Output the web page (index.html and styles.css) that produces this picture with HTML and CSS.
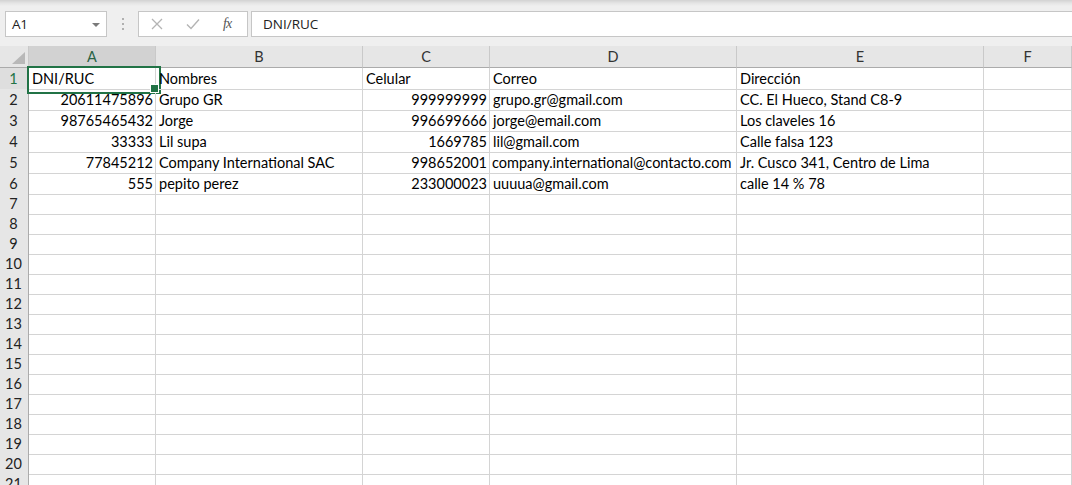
FILE: index.html
```html
<!DOCTYPE html>
<html lang="es">
<head>
<meta charset="utf-8">
<title>Hoja de cálculo</title>
<link rel="stylesheet" href="styles.css">
</head>
<body>
<div class="formula-area">
  <div class="namebox"><span class="ref">A1</span><span class="caret"></span></div>
  <div class="grip"><i></i><i></i><i></i></div>
  <div class="fxbox">
    <svg class="ic-x" width="12" height="12" viewBox="0 0 12 12"><path d="M1 1 L11 11 M11 1 L1 11" stroke="#b4b4b4" stroke-width="1.3" fill="none"/></svg>
    <svg class="ic-ok" width="14" height="12" viewBox="0 0 14 12"><path d="M1 6.5 L5 10.5 L13 1.5" stroke="#b4b4b4" stroke-width="1.4" fill="none"/></svg>
    <span class="fx">fx</span>
  </div>
  <div class="formula-input">DNI/RUC</div>
</div>

<div class="sheet">
  <div class="row hdr">
    <div class="corner"><span class="tri"></span></div>
    <div class="ch sel">A</div><div class="ch">B</div><div class="ch">C</div><div class="ch">D</div><div class="ch">E</div><div class="ch">F</div>
  </div>
  <div class="row data">
    <div class="rh selrow">1</div>
    <div class="c active">DNI/RUC</div><div class="c">Nombres</div><div class="c">Celular</div><div class="c">Correo</div><div class="c">Dirección</div><div class="c"></div>
  </div>
  <div class="row data">
    <div class="rh">2</div>
    <div class="c n">20611475896</div><div class="c">Grupo GR</div><div class="c n">999999999</div><div class="c">grupo.gr@gmail.com</div><div class="c">CC. El Hueco, Stand C8-9</div><div class="c"></div>
  </div>
  <div class="row data">
    <div class="rh">3</div>
    <div class="c n">98765465432</div><div class="c">Jorge</div><div class="c n">996699666</div><div class="c">jorge@email.com</div><div class="c">Los claveles 16</div><div class="c"></div>
  </div>
  <div class="row data">
    <div class="rh">4</div>
    <div class="c n">33333</div><div class="c">Lil supa</div><div class="c n">1669785</div><div class="c">lil@gmail.com</div><div class="c">Calle falsa 123</div><div class="c"></div>
  </div>
  <div class="row data">
    <div class="rh">5</div>
    <div class="c n">77845212</div><div class="c">Company International SAC</div><div class="c n">998652001</div><div class="c clip">company.international@contacto.com</div><div class="c">Jr. Cusco 341, Centro de Lima</div><div class="c"></div>
  </div>
  <div class="row data">
    <div class="rh">6</div>
    <div class="c n">555</div><div class="c">pepito perez</div><div class="c n">233000023</div><div class="c">uuuua@gmail.com</div><div class="c">calle 14 % 78</div><div class="c"></div>
  </div>
  <div class="row"><div class="rh">7</div><div class="c"></div><div class="c"></div><div class="c"></div><div class="c"></div><div class="c"></div><div class="c"></div></div>
  <div class="row"><div class="rh">8</div><div class="c"></div><div class="c"></div><div class="c"></div><div class="c"></div><div class="c"></div><div class="c"></div></div>
  <div class="row"><div class="rh">9</div><div class="c"></div><div class="c"></div><div class="c"></div><div class="c"></div><div class="c"></div><div class="c"></div></div>
  <div class="row"><div class="rh">10</div><div class="c"></div><div class="c"></div><div class="c"></div><div class="c"></div><div class="c"></div><div class="c"></div></div>
  <div class="row"><div class="rh">11</div><div class="c"></div><div class="c"></div><div class="c"></div><div class="c"></div><div class="c"></div><div class="c"></div></div>
  <div class="row"><div class="rh">12</div><div class="c"></div><div class="c"></div><div class="c"></div><div class="c"></div><div class="c"></div><div class="c"></div></div>
  <div class="row"><div class="rh">13</div><div class="c"></div><div class="c"></div><div class="c"></div><div class="c"></div><div class="c"></div><div class="c"></div></div>
  <div class="row"><div class="rh">14</div><div class="c"></div><div class="c"></div><div class="c"></div><div class="c"></div><div class="c"></div><div class="c"></div></div>
  <div class="row"><div class="rh">15</div><div class="c"></div><div class="c"></div><div class="c"></div><div class="c"></div><div class="c"></div><div class="c"></div></div>
  <div class="row"><div class="rh">16</div><div class="c"></div><div class="c"></div><div class="c"></div><div class="c"></div><div class="c"></div><div class="c"></div></div>
  <div class="row"><div class="rh">17</div><div class="c"></div><div class="c"></div><div class="c"></div><div class="c"></div><div class="c"></div><div class="c"></div></div>
  <div class="row"><div class="rh">18</div><div class="c"></div><div class="c"></div><div class="c"></div><div class="c"></div><div class="c"></div><div class="c"></div></div>
  <div class="row"><div class="rh">19</div><div class="c"></div><div class="c"></div><div class="c"></div><div class="c"></div><div class="c"></div><div class="c"></div></div>
  <div class="row"><div class="rh">20</div><div class="c"></div><div class="c"></div><div class="c"></div><div class="c"></div><div class="c"></div><div class="c"></div></div>
  <div class="row"><div class="rh">21</div><div class="c"></div><div class="c"></div><div class="c"></div><div class="c"></div><div class="c"></div><div class="c"></div></div>
</div>
</body>
</html>
```

FILE: styles.css
```css
* { box-sizing: border-box; }
html, body { margin: 0; padding: 0; }
body {
  width: 1072px;
  height: 485px;
  overflow: hidden;
  background: #ffffff;
  font-family: Lato, "Liberation Sans", sans-serif;
  color: #000;
}

/* ---------- formula bar ---------- */
.formula-area {
  height: 46px;
  display: flex;
  align-items: flex-start;
  padding-top: 11px;
  background: linear-gradient(to bottom, #d2d2d2 0px, #e4e4e4 3px, #efefef 6px, #efefef 100%);
  font-family: "Open Sans", "Noto Sans", sans-serif;
  overflow: hidden;
}
.namebox {
  margin-left: 5px;
  width: 102px;
  height: 26px;
  background: #fff;
  border: 1px solid #c6c6c6;
  display: flex;
  align-items: center;
  justify-content: space-between;
  padding: 0 6px 0 6px;
}
.ref { font-size: 13.5px; color: #222; letter-spacing: -0.2px; }
.caret {
  width: 0; height: 0;
  border-left: 4px solid transparent;
  border-right: 4px solid transparent;
  border-top: 4px solid #7a7a7a;
  margin-top: 1px;
}
.grip {
  width: 31px;
  height: 26px;
  display: flex;
  flex-direction: column;
  align-items: center;
  justify-content: center;
  gap: 3px;
}
.grip i { width: 2px; height: 2px; background: #b0b0b0; display: block; }
.fxbox {
  width: 110px;
  height: 26px;
  background: #fff;
  border: 1px solid #c6c6c6;
  display: flex;
  align-items: center;
  padding-left: 12px;
}
.ic-x { margin-right: 23px; }
.ic-ok { margin-right: 23px; }
.fx {
  font-family: "Liberation Serif", "DejaVu Serif", serif;
  font-style: italic;
  font-size: 14px;
  color: #555;
  letter-spacing: -1px;
}
.formula-input {
  flex: 1;
  margin-left: 3px;
  margin-right: -4px;
  height: 26px;
  background: #fff;
  border: 1px solid #c6c6c6;
  padding-left: 11px;
  font-size: 13.5px;
  line-height: 24px;
  color: #222;
}

/* ---------- sheet ---------- */
.sheet { position: relative; }
.row {
  display: grid;
  grid-template-columns: 29px 127px 207px 127px 247px 247px 88px;
  height: 20px;
}
.row.data { height: 21px; }
.row.hdr { height: 22px; }

.corner {
  background: #e6e6e6;
  border-right: 1px solid #c9c9c9;
  border-bottom: 1px solid #ababab;
  position: relative;
}
.tri {
  position: absolute;
  right: 3px;
  bottom: 3px;
  width: 0; height: 0;
  border-left: 13px solid transparent;
  border-bottom: 12px solid #b8b8b8;
}
.ch {
  background: #e6e6e6;
  border-right: 1px solid #c9c9c9;
  border-bottom: 1px solid #ababab;
  text-align: center;
  font-size: 14.5px;
  line-height: 21px;
  color: #333;
}
.ch.sel { background: #d2d2d2; color: #2a6446; }

.rh {
  background: #e6e6e6;
  border-right: 1px solid #ababab;
  border-bottom: 1px solid #d0d0d0;
  text-align: center;
  font-size: 14.5px;
  line-height: 20px;
  color: #222;
  padding-right: 1px;
}
.row.data .rh { padding-top: 1px; }
.rh.selrow { background: #dedede; color: #217346; }

.c {
  border-right: 1px solid #d4d4d4;
  border-bottom: 1px solid #d4d4d4;
  font-size: 14.5px;
  line-height: 19px;
  padding: 0 2px 0 3px;
  white-space: nowrap;
  overflow: visible;
  position: relative;
}
.row.data .c { line-height: 20px; padding-top: 1px; }
.c.n { text-align: right; padding-right: 2px; }
.c.clip { overflow: hidden; padding-left: 2px; }

.c.active::after {
  content: "";
  position: absolute;
  left: -2px;
  top: -2px;
  width: 130px;
  height: 24px;
  border: 2px solid #217346;
  pointer-events: none;
}
.c.active::before {
  content: "";
  position: absolute;
  right: -4px;
  bottom: -4px;
  width: 7px;
  height: 7px;
  background: #217346;
  border: 1px solid #fff;
  z-index: 2;
}
```
